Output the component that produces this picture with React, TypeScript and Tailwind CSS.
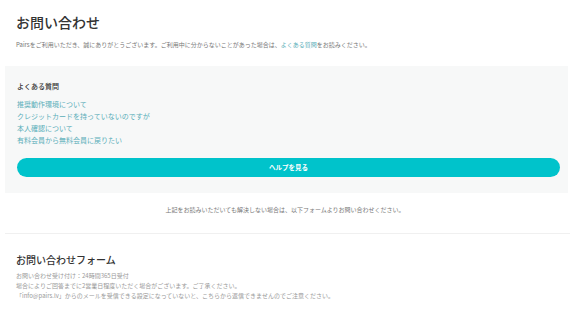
export default function App() {
  const faqs = [
    '推奨動作環境について',
    'クレジットカードを持っていないのですが',
    '本人確認について',
    '有料会員から無料会員に戻りたい',
  ]

  return (
    <div className="w-[570px] h-[312px] bg-white overflow-hidden text-[#333] font-['Noto_Sans_CJK_JP','Noto_Sans',sans-serif]">
      {/* Header */}
      <div className="pl-[16px]">
        <h1 className="mt-[12px] text-[14px] leading-[20px] font-medium text-[#333]">お問い合わせ</h1>
        <p className="mt-[8px] text-[6px] leading-[10px] text-[#777]">
          Pairsをご利用いただき、誠にありがとうございます。ご利用中に分からないことがあった場合は、
          <span className="text-[#5aaeb8]">よくある質問</span>
          をお読みください。
        </p>
      </div>

      {/* FAQ box */}
      <div className="mt-[16px] ml-[5px] mr-[2px] bg-[#f7f8f8] pl-[12px] pr-[8px] pt-[15px] pb-[16px]">
        <h2 className="text-[7px] leading-[10px] font-medium text-[#333]">よくある質問</h2>
        <ul className="mt-[7px]">
          {faqs.map(f => (
            <li key={f} className="text-[7px] leading-[12px] text-[#5aaeb8]">{f}</li>
          ))}
        </ul>
        <button className="mt-[12px] w-full h-[19px] rounded-full bg-[#00c3cb] text-white text-[6.5px] font-bold flex items-center justify-center">
          ヘルプを見る
        </button>
      </div>

      <p className="mt-[12px] text-center text-[6px] leading-[10px] text-[#777]">
        上記をお読みいただいても解決しない場合は、以下フォームよりお問い合わせください。
      </p>

      <div className="mt-[18px] ml-[5px] h-px bg-[#f0f0f0]" />

      {/* Form section */}
      <div className="pl-[16px]">
        <h2 className="mt-[19px] text-[10px] leading-[14px] font-medium text-[#333]">お問い合わせフォーム</h2>
        <div className="mt-[4px] text-[6px] leading-[10px] text-[#999]">
          <p>お問い合わせ受け付け：24時間365日受付</p>
          <p>場合によりご回答までに2営業日程度いただく場合がございます。ご了承ください。</p>
          <p>「info@pairs.lv」からのメールを受信できる設定になっていないと、こちらから返信できませんのでご注意ください。</p>
        </div>
      </div>
    </div>
  )
}
